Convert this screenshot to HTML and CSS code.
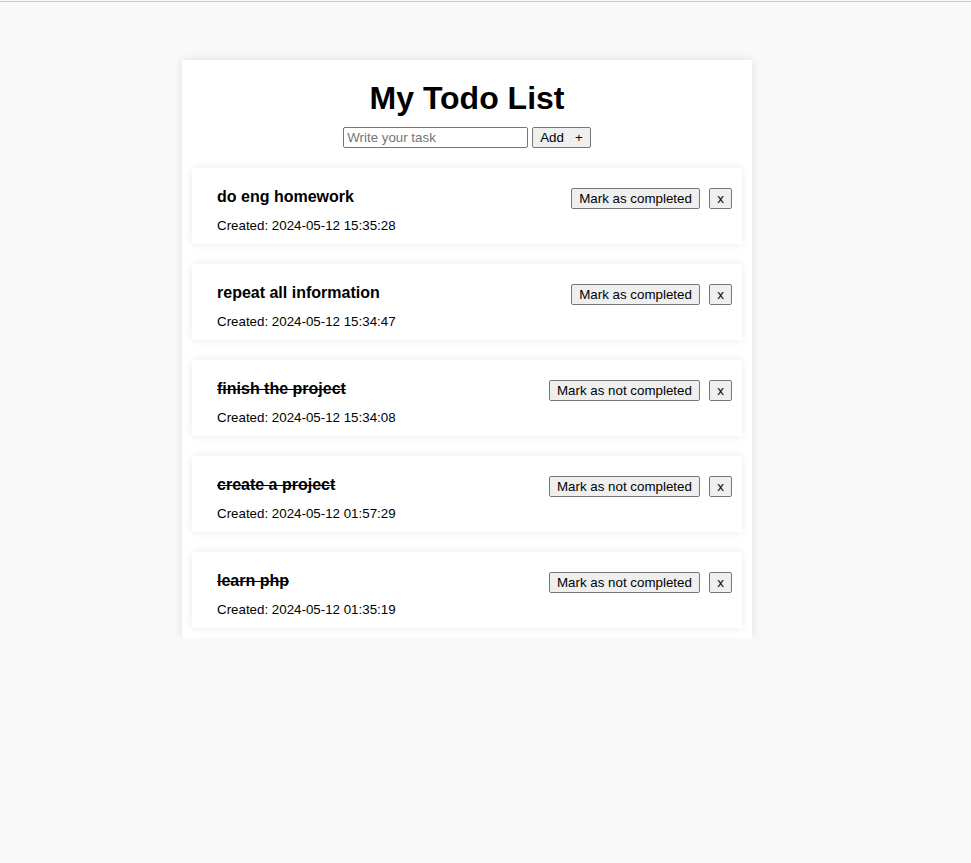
FILE: index.html
```html
<!DOCTYPE html>
<html lang="en">
<head>
<meta charset="utf-8">
<title>My Todo List</title>
<link rel="stylesheet" href="styles.css">
</head>
<body>
<div class="topline"></div>
<main class="container">
  <h1 class="title">My Todo List</h1>
  <form class="add-form">
    <input class="task-input" type="text" placeholder="Write your task">
    <button class="btn" type="button">Add &nbsp;&nbsp;+</button>
  </form>
  <ul class="todo-list">
    <li class="todo">
      <div class="todo-info">
        <h4 class="todo-title">do eng homework</h4>
        <small class="todo-date">Created: 2024-05-12 15:35:28</small>
      </div>
      <div class="todo-actions">
        <button class="btn btn-wide" type="button">Mark as completed</button>
        <button class="btn" type="button">x</button>
      </div>
    </li>
    <li class="todo">
      <div class="todo-info">
        <h4 class="todo-title">repeat all information</h4>
        <small class="todo-date">Created: 2024-05-12 15:34:47</small>
      </div>
      <div class="todo-actions">
        <button class="btn btn-wide" type="button">Mark as completed</button>
        <button class="btn" type="button">x</button>
      </div>
    </li>
    <li class="todo">
      <div class="todo-info">
        <h4 class="todo-title done">finish the project</h4>
        <small class="todo-date">Created: 2024-05-12 15:34:08</small>
      </div>
      <div class="todo-actions">
        <button class="btn btn-wide" type="button">Mark as not completed</button>
        <button class="btn" type="button">x</button>
      </div>
    </li>
    <li class="todo">
      <div class="todo-info">
        <h4 class="todo-title done">create a project</h4>
        <small class="todo-date">Created: 2024-05-12 01:57:29</small>
      </div>
      <div class="todo-actions">
        <button class="btn btn-wide" type="button">Mark as not completed</button>
        <button class="btn" type="button">x</button>
      </div>
    </li>
    <li class="todo">
      <div class="todo-info">
        <h4 class="todo-title done">learn php</h4>
        <small class="todo-date">Created: 2024-05-12 01:35:19</small>
      </div>
      <div class="todo-actions">
        <button class="btn btn-wide" type="button">Mark as not completed</button>
        <button class="btn" type="button">x</button>
      </div>
    </li>
  </ul>
</main>
</body>
</html>
```
FILE: styles.css
```css
html, body {
  margin: 0;
  padding: 0;
  background: #f9f9f9;
  font-family: "Liberation Sans", Arial, sans-serif;
  color: #000;
}

.topline {
  margin-top: 1px;
  height: 1px;
  background: #c8c8c8;
}

.container {
  width: 570px;
  box-sizing: border-box;
  margin: 58px 0 0 182px;
  padding: 10px;
  background: #fff;
  box-shadow: 0 0 10px rgba(0, 0, 0, 0.1);
}

.title {
  margin: 10px 0 10px;
  font-size: 32px;
  line-height: 37px;
  font-weight: bold;
  text-align: center;
}

.add-form {
  display: flex;
  justify-content: center;
  gap: 4px;
  margin: 0 0 20px;
}

.task-input {
  width: 185px;
  height: 21px;
  box-sizing: border-box;
  font-family: "Liberation Sans", Arial, sans-serif;
  font-size: 13.333px;
  padding: 1px 3px;
  border: 1px solid #767676;
  border-radius: 2px;
}

.btn {
  font-family: "Liberation Sans", Arial, sans-serif;
  font-size: 13.333px;
  height: 21px;
  padding: 1px 7px;
  box-sizing: border-box;
  background: #efefef;
  border: 1px solid #767676;
  border-radius: 2px;
  color: #000;
  white-space: pre;
}

.btn-wide {
  padding: 1px 7.5px;
}

.todo-list {
  list-style: none;
  margin: 0;
  padding: 0;
  display: flex;
  flex-direction: column;
  gap: 20px;
}

.todo {
  display: flex;
  justify-content: space-between;
  align-items: flex-start;
  padding: 19px 10px 11px 25px;
  background: #fff;
  box-shadow: 0 0 8px rgba(0, 0, 0, 0.09);
}

.todo-title {
  margin: 0;
  font-size: 16px;
  line-height: 19px;
  font-weight: bold;
}

.todo-title.done {
  text-decoration: line-through;
}

.todo-date {
  display: block;
  margin-top: 12px;
  font-size: 13.333px;
  line-height: 15px;
}

.todo-actions {
  display: flex;
  gap: 9px;
  margin-top: 1px;
}
```
